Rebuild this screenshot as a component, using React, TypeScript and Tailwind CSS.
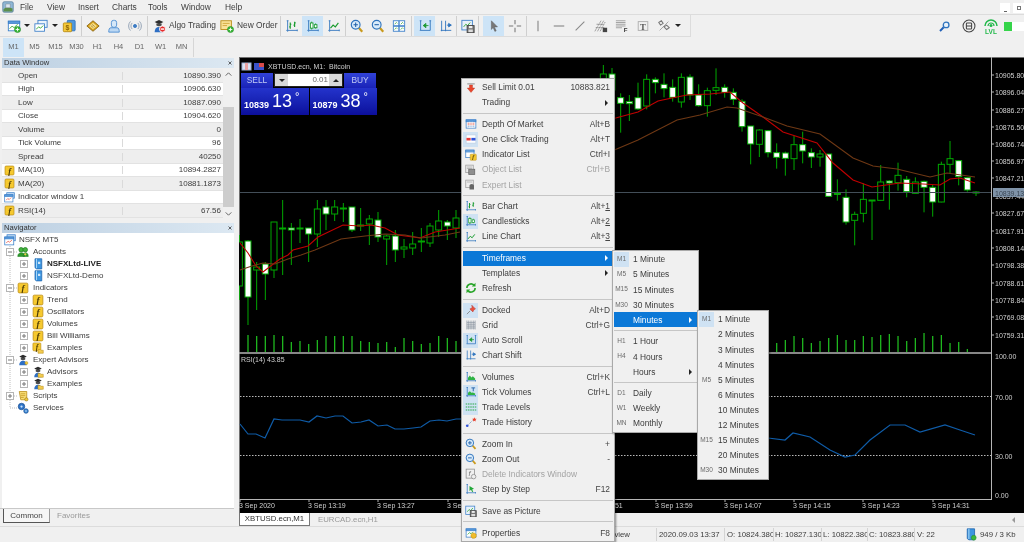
import type { ReactNode } from "react";

// ---------- icons ----------
const axes = <path d="M3 2v11h11M1.5 13H3M3 14.5V13M14 12v2M2 2h2" stroke="#2f74bd" fill="none" />;

const fBadge = (x = 0, y = 0, s = 16) => (
  <g transform={`translate(${x} ${y}) scale(${s / 16})`}>
    <rect x="1.5" y="1.5" width="13" height="13" rx="1.5" fill="#f6c92f" stroke="#b98a12" />
    <text x="8" y="12.5" textAnchor="middle" fontSize="12" fontStyle="italic" fontWeight="700" fontFamily="'Liberation Serif', serif" fill="#4b3a05">f</text>
  </g>
);

const folderBit = <path d="M8 10h3l1 1h3v4H8z" fill="#f3cc4f" stroke="#b98a12" strokeWidth=".7" />;

const cap = (
  <g>
    <path d="M8 1l5 2.4L8 6 3 3.4z" fill="#2c2c2c" />
    <path d="M5 5v2.4c1.8 1.2 4.2 1.2 6 0V5" fill="#4b4b4b" />
    <path d="M3 15c0-4 2-6 5-6s5 2 5 6z" fill="#2e6fc4" />
  </g>
);

const win = (
  <g>
    <rect x="1.5" y="2.5" width="13" height="11" fill="#fff" stroke="#3b7fc9" />
    <rect x="1.5" y="2.5" width="13" height="2.5" fill="#5b9ddd" stroke="#3b7fc9" />
  </g>
);

const icons: Record<string, ReactNode> = {
  newChart: (
    <g>
      {win}
      <path d="M3 11l3-3 2 2 4-4" stroke="#2aa52a" fill="none" />
      <circle cx="12" cy="12" r="3.5" fill="#3cb83c" stroke="#1c861c" strokeWidth=".6" />
      <path d="M12 10v4M10 12h4" stroke="#fff" />
    </g>
  ),
  profiles: (
    <g>
      <rect x="4.5" y="1.5" width="10.5" height="8" fill="#eaf3fb" stroke="#3b7fc9" />
      <rect x="1" y="5.5" width="11" height="8.5" fill="#fff" stroke="#3b7fc9" />
      <path d="M2.5 11.5l3-2.5 2 1.5 3-3" stroke="#2aa52a" fill="none" />
    </g>
  ),
  market: (
    <g>
      <rect x="6" y="1.5" width="9" height="12" rx="1" fill="#4d97dd" stroke="#2f74bd" />
      <rect x="1.5" y="4.5" width="9.5" height="10" rx="1" fill="#f5c93a" stroke="#b98a12" />
      <text x="6.2" y="12.5" textAnchor="middle" fontSize="8" fontWeight="700" fill="#8b6508">$</text>
    </g>
  ),
  book: (
    <g>
      <path d="M1 8l7-6 7 6-7 6z" fill="#d9a520" stroke="#8a6510" />
      <path d="M3.5 8L8 4.2 12.5 8 8 11.8z" fill="#f6de86" />
      <path d="M5.5 7.5l3 2.5M7 6.2l3 2.5" stroke="#8a6510" strokeWidth=".7" />
    </g>
  ),
  person: (
    <g>
      <path d="M2 15c0-3 .5-5 2.5-5h7c2 0 2.5 2 2.5 5z" fill="#bcd8f3" stroke="#4a8cd0" />
      <rect x="5" y="1.5" width="6" height="8" rx="2.5" fill="#d6e8f8" stroke="#4a8cd0" />
    </g>
  ),
  signal: (
    <g fill="none" stroke="#8a9bb0">
      <circle cx="8" cy="8" r="1.8" fill="#3d7cc4" stroke="#3d7cc4" />
      <path d="M4.8 4.5a5 5 0 0 0 0 7M11.2 4.5a5 5 0 0 1 0 7" />
      <path d="M2.8 2.8a7.5 7.5 0 0 0 0 10.4M13.2 2.8a7.5 7.5 0 0 1 0 10.4" />
    </g>
  ),
  algo: (
    <g>
      {cap}
      <circle cx="12" cy="11.5" r="3.5" fill="#e52b2b" stroke="#fff" />
      <rect x="10" y="10.7" width="4" height="1.6" fill="#fff" />
    </g>
  ),
  newOrder: (
    <g>
      <rect x="1" y="2" width="12" height="10" fill="#fae39a" stroke="#b98a12" />
      <path d="M3 5h8M3 7.5h5" stroke="#d0a436" />
      <circle cx="12" cy="12" r="3.5" fill="#3cb83c" stroke="#1c861c" strokeWidth=".6" />
      <path d="M12 10v4M10 12h4" stroke="#fff" />
    </g>
  ),
  bar: (
    <g>
      {axes}
      <path d="M6 4v7M4.8 9H6M6 6h1.2M11 3v6M9.8 7H11M11 4.5h1.2" stroke="#159a2c" strokeWidth="1.3" fill="none" />
    </g>
  ),
  candle: (
    <g>
      {axes}
      <path d="M6.5 3v9M11 5v6" stroke="#159a2c" />
      <rect x="5" y="4.5" width="3" height="6" fill="#fff" stroke="#159a2c" />
      <rect x="9.5" y="6.5" width="3" height="3.5" fill="#fff" stroke="#159a2c" />
    </g>
  ),
  line: (
    <g>
      {axes}
      <path d="M4 10.5l3-3.5 2.5 2L13 4.5" stroke="#159a2c" strokeWidth="1.3" fill="none" />
    </g>
  ),
  zoomIn: (
    <g>
      <path d="M10 10l4 4.5" stroke="#c99a1d" strokeWidth="2.4" />
      <circle cx="6.5" cy="6.5" r="5" fill="#d9ebfa" stroke="#2f74bd" strokeWidth="1.3" />
      <path d="M6.5 4v5M4 6.5h5" stroke="#1f5fa8" strokeWidth="1.2" />
    </g>
  ),
  zoomOut: (
    <g>
      <path d="M10 10l4 4.5" stroke="#c99a1d" strokeWidth="2.4" />
      <circle cx="6.5" cy="6.5" r="5" fill="#d9ebfa" stroke="#2f74bd" strokeWidth="1.3" />
      <path d="M4 6.5h5" stroke="#1f5fa8" strokeWidth="1.2" />
    </g>
  ),
  tile: (
    <g>
      <rect x="1.5" y="2" width="13" height="12" fill="#fff" stroke="#3b7fc9" />
      <path d="M8 2v12M1.5 8h13" stroke="#3b7fc9" strokeWidth="1.5" />
      <path d="M3 6l2-2 1 1M10 6l2-2 1 1M3 12l2-2 1 1M10 12l2-2 1 1" stroke="#2aa52a" fill="none" strokeWidth=".8" />
    </g>
  ),
  autoScroll: (
    <g>
      <path d="M3 2v11h11M14 2v11M2 2h2M13 2h2M2 13h1" stroke="#2f74bd" fill="none" />
      <path d="M6 7.5h6M6 7.5l3-2.5v5z" stroke="#1d9a33" fill="#1d9a33" />
    </g>
  ),
  shift: (
    <g>
      <path d="M3 2v12M7.5 2v12M2 13h12" stroke="#2f74bd" fill="none" />
      <path d="M9 7h5M11 5l3 2-3 2z" stroke="#2f74bd" fill="#2f74bd" />
    </g>
  ),
  savePic: (
    <g>
      <rect x="1" y="1.5" width="12" height="11" fill="#e8f1fa" stroke="#3b7fc9" />
      <path d="M3 9l2.5-3 2 1.5 3-3.5" stroke="#2aa52a" fill="none" />
      <rect x="7" y="7.5" width="8" height="8" fill="#777" stroke="#444" />
      <rect x="9" y="8" width="4" height="2.5" fill="#eee" />
      <rect x="8.5" y="12" width="5" height="3" fill="#ddd" />
    </g>
  ),
  cursor: <path d="M5 2l7 7H8.5l2 4.5-1.5.7-2-4.5L5 12z" fill="#777" stroke="#555" strokeWidth=".5" />,
  cross: <path d="M8 1v5M8 10v5M1 8h5M10 8h5" stroke="#777" strokeWidth="1.2" />,
  vline: <path d="M8 2v12" stroke="#888" strokeWidth="1.3" />,
  hline: <path d="M2 8h12" stroke="#888" strokeWidth="1.3" />,
  tline: <path d="M3 13L13 3" stroke="#888" strokeWidth="1.3" />,
  fib: (
    <g>
      <path d="M1 14L8 2M4 14l7-12M7 14l6-11M2 10h10M3 6h8" stroke="#777" strokeDasharray="1.3 .8" fill="none" />
      <rect x="10" y="10" width="5" height="5" fill="#444" />
    </g>
  ),
  fibF: (
    <g>
      <path d="M1 2h11M1 4h11M1 6h11M1 8h11M1 10h7" stroke="#999" />
      <text x="12" y="15" textAnchor="middle" fontSize="7" fontWeight="700" fill="#333">F</text>
    </g>
  ),
  textT: (
    <g>
      <rect x="2.5" y="3" width="11" height="10" fill="none" stroke="#aaa" />
      <text x="8" y="12" textAnchor="middle" fontSize="10" fontWeight="700" fontFamily="'Liberation Serif', serif" fill="#555">T</text>
    </g>
  ),
  shapes: (
    <g fill="none" stroke="#777" strokeWidth="1.2">
      <path d="M2 4l3-2 2 3-3 2z" />
      <path d="M8 9l3-2 3 3-3 2z" />
      <path d="M3 13L13 3" strokeWidth=".7" />
    </g>
  ),
  loupe: (
    <g>
      <path d="M7 9l-4.5 4.5" stroke="#1f5fb8" strokeWidth="2.4" />
      <circle cx="10" cy="6" r="3.5" fill="#e8f2fb" stroke="#2f74bd" strokeWidth="1.6" />
    </g>
  ),
  vps: (
    <g fill="none" stroke="#444" strokeWidth="1.2">
      <circle cx="8" cy="8" r="6.8" />
      <rect x="5" y="4.5" width="6" height="7" rx="1" />
      <path d="M5 8h6" />
    </g>
  ),
  sell: (
    <g>
      <path d="M3 2.5h10" stroke="#999" strokeWidth="1.5" />
      <path d="M6 4h4v4h3l-5 6-5-6h3z" fill="#e8452c" stroke="#b92f1a" strokeWidth=".5" />
    </g>
  ),
  dom: (
    <g>
      {win}
      <path d="M3.5 7h9M3.5 9h9" stroke="#e46a5e" />
      <path d="M3.5 11h9" stroke="#5b9ddd" />
      <path d="M6.5 5v8M9.5 5v8" stroke="#fff" />
    </g>
  ),
  oneClick: (
    <g>
      <rect x="1.5" y="2.5" width="13" height="11" fill="#fff" stroke="#bcd0e4" />
      <rect x="2" y="6.5" width="5.5" height="3.5" fill="#e63a3a" />
      <rect x="8.5" y="6.5" width="5.5" height="3.5" fill="#2f52d8" />
    </g>
  ),
  indList: (
    <g>
      <rect x="1" y="1.5" width="11" height="10" fill="#fff" stroke="#3b7fc9" />
      <rect x="1" y="1.5" width="11" height="2.5" fill="#7fb5e6" stroke="#3b7fc9" />
      {fBadge(6, 6, 10)}
    </g>
  ),
  objList: (
    <g>
      <rect x="1" y="1.5" width="10" height="10" fill="#eee" stroke="#9a9a9a" />
      <path d="M2.5 4h7M2.5 6h7" stroke="#aaa" />
      <rect x="5" y="7" width="8" height="7" fill="#8f8f8f" stroke="#666" />
    </g>
  ),
  expList: (
    <g>
      <rect x="1" y="1.5" width="10" height="10" fill="#eee" stroke="#9a9a9a" />
      <path d="M2.5 4h7" stroke="#aaa" />
      <path d="M6 9c0-1.5 1.5-2.5 3-2.5S12 7.5 12 9v5H6z" fill="#666" />
    </g>
  ),
  refresh: (
    <g fill="none" stroke="#2aa52a" strokeWidth="2.2">
      <path d="M2.5 8a5.5 5.5 0 0 1 9.5-3.8" />
      <path d="M13.5 8A5.5 5.5 0 0 1 4 11.8" />
      <path d="M14 1v5H9zM2 15v-5h5z" fill="#2aa52a" stroke="none" />
    </g>
  ),
  docked: (
    <g>
      <path d="M9 1.5l5 5-2 1-1.5 3-4-4 3-1.5z" fill="#e8503f" stroke="#b3352a" strokeWidth=".6" />
      <path d="M7 9l-4.5 4.5" stroke="#888" strokeWidth="1.2" />
    </g>
  ),
  grid: <path d="M2.5 2v12M13.5 2v12M2.5 4.5h11M2.5 7h11M2.5 9.5h11M2.5 12h11M5 2v12M8 2v12M11 2v12" stroke="#7b8794" strokeWidth=".8" fill="none" />,
  volumes: (
    <g>
      {axes}
      <path d="M4 12V9l2.5-3 2 2.5 2-1.5 3 3v2z" fill="#2fb344" />
      <path d="M8 2h5" stroke="#aaa" />
    </g>
  ),
  tickVol: (
    <g>
      {axes}
      <path d="M4 12V9l2.5-2 2 2 2-.5 3 1.5v2z" fill="#2fb344" />
      <path d="M8.5 2.5h5M11 2.5V7" stroke="#1f5fa8" strokeWidth="1.2" />
    </g>
  ),
  levels: <path d="M1 4h14M1 8h14M1 12h14" stroke="#27a744" strokeWidth="1.3" strokeDasharray="2 1" />,
  history: (
    <g>
      <path d="M3 13l9-9" stroke="#5b7fa8" strokeDasharray="1.5 1.2" />
      <circle cx="3" cy="13" r="1.8" fill="#2f52d8" />
      <path d="M12.5 1.5l.9 2 2.1.3-1.5 1.5.3 2.1-1.8-1-1.9 1 .4-2.1L9.5 3.8l2.1-.3z" fill="#e8402c" />
    </g>
  ),
  delInd: (
    <g fill="none" stroke="#8a8a8a">
      <rect x="1.5" y="1.5" width="11" height="12" />
      <text x="6" y="11" textAnchor="middle" fontSize="10" fontStyle="italic" fill="#777" stroke="none">f</text>
      <circle cx="11.5" cy="11.5" r="3" fill="#eee" />
    </g>
  ),
  step: (
    <g>
      {axes}
      <path d="M6 4l6 3.5-2.5 1 1.5 3-1.5.6-1.5-3-2 1.7z" fill="#22a83a" />
    </g>
  ),
  props: (
    <g>
      {win}
      <path d="M3.5 10L6 7.5 8 9l2.5-2.5" stroke="#2aa52a" fill="none" />
      <circle cx="11.5" cy="11.5" r="3.6" fill="#f0bd2b" stroke="#b98a12" strokeDasharray="1.5 .7" />
    </g>
  ),
  nsfxWin: (
    <g>
      <rect x="4" y="1" width="11" height="8" fill="#bcd8f3" stroke="#3b7fc9" />
      <rect x="1" y="4" width="12" height="10.5" fill="#fff" stroke="#3b7fc9" />
      <rect x="1" y="4" width="12" height="2.5" fill="#5b9ddd" stroke="#3b7fc9" />
      <path d="M3 12l2.5-2.5 2 1.5 3-3" stroke="#e8503f" fill="none" />
    </g>
  ),
  accounts: (
    <g>
      <circle cx="5.5" cy="5" r="3" fill="#45b33f" stroke="#1e7d1e" />
      <circle cx="11" cy="5" r="3" fill="#45b33f" stroke="#1e7d1e" />
      <path d="M1 14c0-3.5 2-5 5-5s4 1 4 5zM8 14c0-3 1.5-5 3.5-5s3.500 1.500 3.500 5z" fill="#2f9a2f" stroke="#1e7d1e" strokeWidth=".7" />
      <circle cx="11" cy="11" r="1.5" fill="#f0d34a" />
    </g>
  ),
  server: (
    <g>
      <path d="M4 1h9v13.5H6L4 13z" fill="#3c96e0" stroke="#1f64ae" />
      <path d="M6 1v12.5" stroke="#a8d6f6" strokeWidth="1.3" />
      <rect x="8" y="5" width="3" height="3" fill="#cfe7fa" />
    </g>
  ),
  f: fBadge(),
  fFolder: (
    <g>
      {fBadge(0, 0, 13)}
      {folderBit}
    </g>
  ),
  expert: (
    <g>
      {cap}
      <circle cx="12.5" cy="12" r="2" fill="#f0c93e" stroke="#b98a12" strokeWidth=".6" />
    </g>
  ),
  expertFolder: (
    <g>
      {cap}
      {folderBit}
    </g>
  ),
  scripts: (
    <g>
      <path d="M3 2h10v11H5z" fill="#f7dc74" stroke="#b98a12" />
      <path d="M5 5h6M5 7.5h6M5 10h4" stroke="#b98a12" strokeWidth=".8" />
      <circle cx="12.5" cy="12.5" r="2.2" fill="#f0c93e" stroke="#7a5d0b" strokeWidth=".6" />
    </g>
  ),
  services: (
    <g>
      <circle cx="6" cy="6" r="4.3" fill="#2f74c8" stroke="#1a4f91" />
      <circle cx="6" cy="6" r="1.5" fill="#cfe4f8" />
      <circle cx="12" cy="12" r="3" fill="#3e8ad8" stroke="#1a4f91" />
      <circle cx="12" cy="12" r="1" fill="#cfe4f8" />
    </g>
  ),
  appLogo: (
    <g>
      <rect x="1" y="1" width="14" height="14" rx="2" fill="#8fb7d6" stroke="#5a7f9e" />
      <path d="M2 11c3-3 5-4 12-1v4H2z" fill="#5c8f4c" />
      <path d="M5 4h6v5H5z" fill="#d9e6f2" stroke="#6b6b6b" strokeWidth=".5" />
    </g>
  ),
  lvl: (
    <g>
      <path d="M2 8a6 6 0 0 1 12 0" fill="none" stroke="#21b84a" strokeWidth="1.5" />
      <path d="M5 8a3 3 0 0 1 6 0" fill="none" stroke="#21b84a" strokeWidth="1.2" />
      <circle cx="8" cy="7.5" r="1.5" fill="#21b84a" />
      <text x="8" y="15.5" textAnchor="middle" fontSize="6.5" fontWeight="700" fill="#21b84a">LVL</text>
    </g>
  ),
  demo: (
    <g>
      <path d="M4 1h9v13.5H6L4 13z" fill="#3c96e0" stroke="#1f64ae" />
      <path d="M6 1v12.5" stroke="#a8d6f6" strokeWidth="1.3" />
      <circle cx="12" cy="12" r="3" fill="#3cb83c" stroke="#1c861c" strokeWidth=".6" />
    </g>
  ),
  close: <path d="M4 4l8 8M12 4l-8 8" stroke="#333" strokeWidth="2" />,
  up: <path d="M3 10l5-5 5 5" stroke="#555" strokeWidth="1.6" fill="none" />,
  down: <path d="M3 6l5 5 5-5" stroke="#555" strokeWidth="1.6" fill="none" />,
};

function Icon({ name, className = "h-[14px] w-[14px]" }: { name: string; className?: string }) {
  return (
    <svg viewBox="0 0 16 16" className={className}>
      {icons[name]}
    </svg>
  );
}

// ---------- top bars ----------
function Btn({ name, active }: { name: string; active?: boolean }) {
  return (
    <div className={`flex h-[20px] w-[21px] shrink-0 items-center justify-center ${active ? "bg-[#cde4f7]" : ""}`}>
      <Icon name={name} />
    </div>
  );
}

const Sep = () => <div className="h-[20px] w-px shrink-0 bg-[#cfcfcf]" />;
const Caret = () => <div className="h-0 w-0 border-x-[3px] border-t-[3px] border-x-transparent border-t-[#222]" />;

function MenuBar() {
  return (
    <div className="flex h-[15px] items-center border-b border-[#dcdcdc]">
      <div className="flex w-[20px] justify-center pr-[5px]">
        <Icon name="appLogo" className="h-[12px] w-[12px]" />
      </div>
      <span className="w-[27px]">File</span>
      <span className="w-[31px]">View</span>
      <span className="w-[34px]">Insert</span>
      <span className="w-[36px]">Charts</span>
      <span className="w-[33px]">Tools</span>
      <span className="w-[44px]">Window</span>
      <span>Help</span>
      <div className="ml-auto flex gap-[3px] self-start pt-[3px]">
        <div className="flex h-[10px] w-[10px] items-end justify-center bg-white pb-px">
          <div className="h-px w-[3px] bg-[#666]" />
        </div>
        <div className="flex h-[10px] w-[11px] items-center justify-center bg-white">
          <div className="h-[4px] w-[4px] border border-[#777]" />
        </div>
      </div>
    </div>
  );
}

function Toolbar() {
  return (
    <div className="flex h-[22px] items-center">
      <div className="flex h-full w-[691px] shrink-0 items-center border-r border-b border-[#dcdcdc] pl-[5px]">
        <div className="flex w-[18px] justify-center"><Icon name="newChart" /></div>
        <div className="flex w-[8px] justify-center"><Caret /></div>
        <div className="flex w-[20px] justify-center"><Icon name="profiles" /></div>
        <div className="flex w-[8px] justify-center"><Caret /></div>
        <div className="flex w-[19px] justify-center"><Icon name="market" /></div>
        <div className="ml-[3px]"><Sep /></div>
        <Btn name="book" />
        <Btn name="person" />
        <Btn name="signal" />
        <div className="ml-[2px]"><Sep /></div>
        <div className="ml-[4px] flex w-[68px] shrink-0 items-center gap-[3px] whitespace-nowrap">
          <Icon name="algo" />
          <span>Algo Trading</span>
        </div>
        <div className="flex w-[60px] shrink-0 items-center gap-[3px] whitespace-nowrap">
          <Icon name="newOrder" />
          <span>New Order</span>
        </div>
        <Sep />
        <Btn name="bar" />
        <Btn name="candle" active />
        <Btn name="line" />
        <div className="ml-px"><Sep /></div>
        <Btn name="zoomIn" />
        <Btn name="zoomOut" />
        <Btn name="tile" />
        <div className="ml-[2px]"><Sep /></div>
        <div className="ml-[2px]"><Btn name="autoScroll" active /></div>
        <Btn name="shift" />
        <Sep />
        <Btn name="savePic" />
        <Sep />
        <div className="ml-[4px]"><Btn name="cursor" active /></div>
        <Btn name="cross" />
        <div className="ml-px"><Sep /></div>
        <Btn name="vline" />
        <Btn name="hline" />
        <Btn name="tline" />
        <Btn name="fib" />
        <Btn name="fibF" />
        <Btn name="textT" />
        <Btn name="shapes" />
        <div className="flex w-[8px] justify-center"><Caret /></div>
      </div>
      <div className="ml-auto flex items-center">
        <Icon name="loupe" className="h-[13px] w-[13px]" />
        <Icon name="vps" className="ml-[11px] h-[14px] w-[14px]" />
        <Icon name="lvl" className="ml-[7px] h-[16px] w-[16px]" />
        <div className="ml-[5px] flex h-[9px] w-[20px] bg-white">
          <div className="h-full w-[8px] bg-[#35d44a]" />
        </div>
      </div>
    </div>
  );
}

const periods = ["M1", "M5", "M15", "M30", "H1", "H4", "D1", "W1", "MN"];

function PeriodBar() {
  return (
    <div className="flex h-[20px] items-center pl-[3px] text-[7.5px] text-[#666]">
      {periods.map((p, i) => (
        <div key={p} className={`flex h-[19px] w-[21px] items-center justify-center ${i === 0 ? "bg-[#cde4f7]" : ""}`}>
          {p}
        </div>
      ))}
      <div className="ml-[1px] h-[19px] w-px bg-[#d6d6d6]" />
    </div>
  );
}

// ---------- left panels ----------
function TitleBar({ title }: { title: string }) {
  return (
    <div className="mx-[2px] flex h-[10px] w-[232px] items-center justify-between bg-linear-to-r from-[#bdd0e2] to-[#dce8f2] pl-[2px] pr-[1px] text-[7.6px] leading-none text-[#333]">
      <span>{title}</span>
      <Icon name="close" className="h-[6px] w-[6px]" />
    </div>
  );
}

const dataRows: { name: string; value?: string; icon?: string }[] = [
  { name: "Open", value: "10890.390" },
  { name: "High", value: "10906.630" },
  { name: "Low", value: "10887.090" },
  { name: "Close", value: "10904.620" },
  { name: "Volume", value: "0" },
  { name: "Tick Volume", value: "96" },
  { name: "Spread", value: "40250" },
  { name: "MA(10)", value: "10894.2827", icon: "f" },
  { name: "MA(20)", value: "10881.1873", icon: "f" },
  { name: "Indicator window 1", icon: "nsfxWin" },
  { name: "RSI(14)", value: "67.56", icon: "f" },
];

function DataWindow() {
  return (
    <div className="pt-px">
      <TitleBar title="Data Window" />
      <div className="ml-[2px] mt-px flex w-[232px]">
        <div className="w-[221px]">
          {dataRows.map((r, i) => (
            <div key={r.name} className={`flex h-[13.5px] items-center border-b border-[#e2e2e2] pt-px ${i % 2 ? "bg-white" : "bg-[#eeeeee]"}`}>
              <div className="flex w-[15px] justify-center">
                {r.icon && <Icon name={r.icon} className="h-[11px] w-[11px]" />}
              </div>
              <span className="flex-1 whitespace-nowrap pl-px">{r.name}</span>
              {r.value && (
                <span className="w-[101px] border-l border-[#dadada] pr-[2px] text-right">{r.value}</span>
              )}
            </div>
          ))}
        </div>
        <div className="flex w-[11px] flex-col items-center">
          <Icon name="up" className="mt-[1px] h-[9px] w-[9px]" />
          <div className="mt-[28px] h-[100px] w-full bg-[#cdcdcd]" />
          <Icon name="down" className="mt-auto h-[9px] w-[9px]" />
        </div>
      </div>
    </div>
  );
}

function Guide({ box, tee, end, line = true }: { box?: "plus" | "minus"; tee?: boolean; end?: boolean; line?: boolean }) {
  return (
    <svg viewBox="0 0 14 12" className="h-[12px] w-[14px] shrink-0">
      {line && <path d={end ? "M7 0v6" : "M7 0v12"} stroke="#bdbdbd" strokeDasharray="1 1" />}
      {tee && <path d="M7 6h7" stroke="#bdbdbd" strokeDasharray="1 1" />}
      {box && <rect x="3.5" y="2.5" width="7" height="7" fill="#fff" stroke="#b5b5b5" />}
      {box && <path d="M5 6h4" stroke="#777" />}
      {box === "plus" && <path d="M7 4v4" stroke="#777" />}
    </svg>
  );
}

const tree: { label: string; icon: string; level: 1 | 2; box?: "plus" | "minus"; bold?: boolean; end?: boolean }[] = [
  { label: "Accounts", icon: "accounts", level: 1, box: "minus" },
  { label: "NSFXLtd-LIVE", icon: "server", level: 2, bold: true },
  { label: "NSFXLtd-Demo", icon: "server", level: 2 },
  { label: "Indicators", icon: "f", level: 1, box: "minus" },
  { label: "Trend", icon: "f", level: 2 },
  { label: "Oscillators", icon: "f", level: 2 },
  { label: "Volumes", icon: "f", level: 2 },
  { label: "Bill Williams", icon: "f", level: 2 },
  { label: "Examples", icon: "fFolder", level: 2 },
  { label: "Expert Advisors", icon: "expert", level: 1, box: "minus" },
  { label: "Advisors", icon: "expertFolder", level: 2 },
  { label: "Examples", icon: "expertFolder", level: 2 },
  { label: "Scripts", icon: "scripts", level: 1, box: "plus" },
  { label: "Services", icon: "services", level: 1, end: true },
];

function Navigator() {
  return (
    <div className="mt-[5px] flex min-h-0 flex-1 flex-col">
      <TitleBar title="Navigator" />
      <div className="ml-[2px] flex w-[232px] flex-1 flex-col bg-white pl-px pt-px">
        <div className="flex h-[12px] items-center">
          <div className="flex w-[14px] justify-center"><Icon name="nsfxWin" className="h-[12px] w-[12px]" /></div>
          <span className="ml-[2px]">NSFX MT5</span>
        </div>
        {tree.map((t) => (
          <div key={t.label + t.level + t.icon} className="flex h-[12px] items-center">
            <Guide box={t.level === 1 ? t.box : undefined} tee={t.level === 1} end={t.end} />
            {t.level === 2 && <Guide box="plus" line={false} />}
            <div className={`flex w-[12px] shrink-0 justify-center ${t.level === 2 ? "ml-px" : ""}`}>
              <Icon name={t.icon} className="h-[12px] w-[12px]" />
            </div>
            <span className={`${t.level === 2 ? "ml-[3px]" : "ml-[4px]"} ${t.bold ? "font-bold text-[#222]" : ""}`}>{t.label}</span>
          </div>
        ))}
      </div>
      <div className="flex h-[18px] w-[234px] border-t border-[#c8c8c8] pl-[3px]">
        <div className="flex h-[14px] w-[47px] items-center justify-center border-x border-b border-l-[#555] border-b-[#555] border-r-[#999] bg-[#f6f6f6] text-[#444]">
          Common
        </div>
        <span className="ml-[7px] mt-[3px] text-[#999]">Favorites</span>
      </div>
    </div>
  );
}

// ---------- chart ----------
// [wickTop, wickBottom, bodyTop, bodyBottom, white]
type Bar = [number, number, number, number, number];
const xAt = (k: number) => 274 + k * 8.667;
const z = (n: number) => 60 + n / 3;

const leftBars: [number, ...Bar][] = [
  [-4, 235, 300, 242, 286, 0],
  [-3, 240, 325, 241, 297, 1],
  [-2, 262, 310, 267, 270, 0],
  [-1, 262, 300, 264, 274, 1],
  [0, 222, 278, 222, 270, 0],
  [1, 200, 275, 228, 229, 1],
  [2, 223, 265, 228, 230, 1],
  [3, 219, 243, 228, 229, 1],
  [4, 228, 262, 228, 234, 1],
  [5, 200, 247, 209, 234, 0],
  [6, 200, 230, 207, 214, 1],
  [7, 200, 221, 207, 214, 0],
  [8, 203, 222, 208, 209, 1],
  [9, 207, 232, 207, 230, 1],
  [10, 208, 231, 225, 226, 1],
  [11, 215, 245, 219, 224, 0],
  [12, 212, 242, 220, 237, 1],
  [13, 235, 265, 236, 239, 0],
  [14, 230, 262, 236, 250, 1],
  [15, 239, 258, 247, 249, 0],
  [16, 232, 255, 244, 248, 0],
  [17, 228, 252, 241, 242, 1],
  [18, 223, 247, 226, 243, 0],
  [19, 210, 237, 221, 230, 0],
  [20, 220, 240, 222, 226, 1],
  [21, 210, 238, 218, 228, 0],
  [38, 65, 100, 74, 95, 0],
  [39, 68, 100, 74, 90, 1],
];

// zoomed coords of the right half, index 0 sits at k = 40
const rightBars: Bar[] = [
  [100, 218, 113, 130, 1], [105, 183, 125, 131, 1], [68, 150, 113, 147, 1], [43, 148, 58, 138, 0],
  [52, 100, 58, 68, 1], [40, 112, 73, 86, 1], [58, 125, 82, 112, 1], [40, 143, 52, 126, 0],
  [43, 120, 51, 105, 1], [73, 140, 105, 137, 1], [83, 170, 92, 137, 0], [25, 105, 83, 91, 0],
  [73, 113, 82, 97, 1], [85, 135, 97, 118, 1], [118, 215, 124, 200, 1], [198, 313, 198, 252, 1],
  [208, 291, 210, 253, 0], [210, 292, 212, 278, 1], [250, 326, 278, 292, 1], [275, 347, 279, 295, 1],
  [228, 330, 254, 296, 0], [215, 310, 254, 273, 1], [265, 324, 278, 291, 1], [270, 320, 282, 291, 0],
  [282, 410, 282, 409, 1], [358, 422, 400, 403, 1], [388, 494, 412, 486, 1], [455, 556, 463, 481, 0],
  [370, 487, 418, 460, 0], [420, 540, 420, 422, 1], [315, 421, 366, 421, 0], [360, 449, 363, 369, 1],
  [308, 392, 346, 368, 0], [348, 412, 358, 395, 1], [352, 400, 366, 400, 0], [362, 457, 364, 382, 1],
  [375, 470, 382, 426, 1], [305, 427, 313, 426, 0], [243, 340, 296, 313, 0], [300, 376, 302, 350, 1],
  [352, 395, 353, 390, 1], [394, 408, 396, 398, 1],
];

const bars: { x: number; b: Bar }[] = [
  ...leftBars.map(([k, a, b, c, d, w]) => ({ x: xAt(k), b: [a, b, c, d, w] as Bar })),
  ...rightBars.map(([a, b, c, d, w], i) => ({ x: xAt(40 + i), b: [z(a), z(b), z(c), z(d), w] as Bar })),
];

const volTops: [number, number][] = [
  [-3, 335], [-2, 336], [-1, 336], [0, 335], [1, 336], [2, 342], [3, 341], [4, 344], [5, 340], [6, 336], [7, 336],
  [8, 336], [9, 336], [10, 341], [11, 342], [12, 343], [13, 342], [14, 347], [15, 338], [16, 341], [17, 344], [18, 343],
  [19, 336], [20, 338], [21, 341],
  [58, 343], [59, 340], [60, 336], [61, 338], [62, 343], [63, 341], [64, 338], [65, 335], [66, 340], [67, 340], [68, 336],
  [69, 337], [70, 335], [71, 334], [72, 336], [73, 341], [74, 338], [75, 333], [76, 336], [77, 335], [78, 343], [79, 342], [80, 349],
];

const redLeft = "240,243 248,253 256,266 263,272 272,265 280,259 288,255 293,250 308,246 318,237 343,225 360,226 371,225 385,228 398,235 420,238 435,232 460,228";
const redRight = "612,119 638,112 658,101 672,98 687,95 710,94 730,92 743,103 763,117 783,132 817,143 833,163 853,180 872,187 900,183 923,184 940,185 950,179 960,178 975,183";
const brownLeft = "240,270 252,266 263,263 275,264 288,259 301,255 315,250 341,239 365,236 385,234 405,235 421,238 445,235 460,232";
const brownRight = "612,151 638,140 677,120 700,115 727,107 737,108 763,117 787,126 820,134 853,158 873,166 897,169 930,177 947,173 975,177";
const rsiLeft = "240,424 248,434 256,434 265,438 274,419 282,420 291,420 300,420 309,422 317,416 326,418 335,416 343,416 352,423 361,422 369,420 378,426 387,425 395,429 404,429 413,428 421,427 430,421 439,420 447,421 456,419 465,419";
const rsiRight = "768,438 785,440 793,433 810,437 830,450 845,457 855,455 870,440 890,425 905,425 920,432 945,425 960,430 975,435";

const priceLabels: [string, number][] = [
  ["10905.808", 75], ["10896.041", 92], ["10886.274", 110], ["10876.507", 127], ["10866.741", 144], ["10856.974", 161],
  ["10847.210", 178], ["10837.443", 196], ["10827.676", 213], ["10817.910", 231], ["10808.143", 248], ["10798.380", 265],
  ["10788.613", 283], ["10778.846", 300], ["10769.080", 317], ["10759.313", 335],
];
const rsiLabels: [string, number][] = [["100.00", 356], ["70.00", 397], ["30.00", 456], ["0.00", 495]];
const dates: [string, number][] = [
  ["3 Sep 2020", 239], ["3 Sep 13:19", 308], ["3 Sep 13:27", 377], ["3 Sep 13:35", 447], ["3 Sep 13:51", 585],
  ["3 Sep 13:59", 655], ["3 Sep 14:07", 724], ["3 Sep 14:15", 793], ["3 Sep 14:23", 862], ["3 Sep 14:31", 932],
];

function ChartDrawing() {
  const label = { fontSize: 7, fill: "#cfcfcf", fontFamily: "'Liberation Sans', sans-serif" };
  return (
    <svg viewBox="239 57 785 456" className="h-[456px] w-[785px]">
      <rect x="239" y="57" width="785" height="456" fill="#000" />
      <path d="M239 57.5H1024M239.5 57V513" stroke="#707070" />
      {bars.map(({ x, b }, i) => (
        <g key={i}>
          <path d={`M${x} ${b[0]}V${b[1]}`} stroke="#00a800" />
          <rect x={x - 3} y={b[2]} width="6" height={Math.max(b[3] - b[2], 1)} fill={b[4] ? "#fff" : "#000"} stroke="#00a800" />
        </g>
      ))}
      {volTops.map(([k, t]) => (
        <path key={k} d={`M${xAt(k)} ${t}V352`} stroke="#1fb81f" strokeWidth="1.3" />
      ))}
      <polyline points={redLeft} fill="none" stroke="#c00000" strokeWidth="1.1" />
      <polyline points={redRight} fill="none" stroke="#c00000" strokeWidth="1.1" />
      <polyline points={brownLeft} fill="none" stroke="#6f3814" strokeWidth="1.1" />
      <polyline points={brownRight} fill="none" stroke="#6f3814" strokeWidth="1.1" />
      <path d="M240 192.5H991" stroke="#434e58" />
      <path d="M239 353H992" stroke="#b5b5b5" strokeWidth="1.5" />
      <path d="M240 396.5H991M240 455.5H991" stroke="#b8b8b8" strokeDasharray="1.5 1.5" />
      <polyline points={rsiLeft} fill="none" stroke="#0f5ca8" strokeWidth="1.2" />
      <polyline points={rsiRight} fill="none" stroke="#0f5ca8" strokeWidth="1.2" />
      <path d="M240 499.5H992M991.5 57V500" stroke="#b5b5b5" />
      <path d="M991 75h3M991 92h3M991 110h3M991 127h3M991 144h3M991 161h3M991 178h3M991 213h3M991 231h3M991 248h3M991 265h3M991 283h3M991 300h3M991 317h3M991 335h3" stroke="#b5b5b5" />
      {priceLabels.map(([t, y]) => (
        <text key={t} x="995" y={y + 2.5} {...label}>{t}</text>
      ))}
      <rect x="993" y="188" width="31" height="9" fill="#7f93a8" />
      <text x="995" y="195.5" {...label} fill="#3b4754">10839.13</text>
      {rsiLabels.map(([t, y]) => (
        <text key={t} x="995" y={y + 2.5} {...label}>{t}</text>
      ))}
      {dates.map(([t, x]) => (
        <g key={t}>
          <path d={`M${x + 1} 499V502`} stroke="#b5b5b5" />
          <text x={x} y="508" {...label}>{t}</text>
        </g>
      ))}
      <text x="241" y="362" {...label}>RSI(14) 43.85</text>
      <rect x="242" y="63" width="9" height="7" fill="#d8e2f3" stroke="#9fb2d4" />
      <rect x="245" y="63" width="3" height="7" fill="#e8a2a2" />
      <rect x="254" y="63" width="10" height="7" fill="#3b52c8" />
      <rect x="259" y="63" width="5" height="4" fill="#d84a4a" />
      <text x="268" y="69" {...label}>XBTUSD.ecn, M1:{"\u00a0\u00a0"}Bitcoin</text>
    </svg>
  );
}

function OneClick() {
  return (
    <div className="absolute left-[2px] top-[16px] w-[136px] text-white">
      <div className="flex h-[15px] gap-px">
        <div className="flex w-[32px] items-center justify-center bg-linear-to-b from-[#3142d8] to-[#1a22b8] text-[#c3cbf5]">SELL</div>
        <div className="flex h-[14px] w-[69px] border border-[#222] bg-white text-[8px] text-[#666]">
          <div className="flex w-[13px] items-center justify-center bg-[#d8d8d8]"><Caret /></div>
          <div className="flex-1 pr-px text-right leading-[12px]">0.01</div>
          <div className="flex w-[13px] items-center justify-center bg-[#d8d8d8]">
            <div className="h-0 w-0 border-x-[3px] border-b-[3px] border-x-transparent border-b-[#222]" />
          </div>
        </div>
        <div className="flex w-[32px] items-center justify-center bg-linear-to-b from-[#3142d8] to-[#1a22b8] text-[#c3cbf5]">BUY</div>
      </div>
      <div className="flex h-[27px] gap-px">
        {[["10839", "13"], ["10879", "38"]].map(([a, b]) => (
          <div key={a} className="flex flex-1 items-start bg-linear-to-b from-[#2433cc] to-[#0c0e9c] pl-[3px] whitespace-nowrap">
            <span className="mt-[13px] text-[9px] leading-none font-bold">{a}</span>
            <span className="ml-[3px] mt-[2px] text-[18px] leading-[22px]">{b}</span>
            <span className="ml-[3px] mt-[3px] text-[11px] leading-none">°</span>
          </div>
        ))}
      </div>
    </div>
  );
}

// ---------- menus ----------
type Item = {
  label?: string;
  icon?: string;
  key?: ReactNode;
  sub?: boolean;
  off?: boolean;
  on?: boolean;
  hot?: boolean;
  code?: string;
};

const mainMenu: Item[] = [
  { label: "Sell Limit 0.01", icon: "sell", key: "10883.821" },
  { label: "Trading", sub: true },
  {},
  { label: "Depth Of Market", icon: "dom", key: "Alt+B" },
  { label: "One Click Trading", icon: "oneClick", key: "Alt+T", on: true },
  { label: "Indicator List", icon: "indList", key: "Ctrl+I" },
  { label: "Object List", icon: "objList", key: "Ctrl+B", off: true },
  { label: "Expert List", icon: "expList", off: true },
  {},
  { label: "Bar Chart", icon: "bar", key: <>Alt+<u>1</u></> },
  { label: "Candlesticks", icon: "candle", key: <>Alt+<u>2</u></>, on: true },
  { label: "Line Chart", icon: "line", key: <>Alt+<u>3</u></> },
  {},
  { label: "Timeframes", sub: true, hot: true },
  { label: "Templates", sub: true },
  { label: "Refresh", icon: "refresh" },
  {},
  { label: "Docked", icon: "docked", key: "Alt+D", on: true },
  { label: "Grid", icon: "grid", key: "Ctrl+G" },
  { label: "Auto Scroll", icon: "autoScroll", on: true },
  { label: "Chart Shift", icon: "shift" },
  {},
  { label: "Volumes", icon: "volumes", key: "Ctrl+K" },
  { label: "Tick Volumes", icon: "tickVol", key: "Ctrl+L", on: true },
  { label: "Trade Levels", icon: "levels", on: true },
  { label: "Trade History", icon: "history" },
  {},
  { label: "Zoom In", icon: "zoomIn", key: "+" },
  { label: "Zoom Out", icon: "zoomOut", key: "-" },
  { label: "Delete Indicators Window", icon: "delInd", off: true },
  { label: "Step by Step", icon: "step", key: "F12" },
  {},
  { label: "Save as Picture", icon: "savePic" },
  {},
  { label: "Properties", icon: "props", key: "F8" },
];

const timeMenu: Item[] = [
  { code: "M1", label: "1 Minute", on: true },
  { code: "M5", label: "5 Minutes" },
  { code: "M15", label: "15 Minutes" },
  { code: "M30", label: "30 Minutes" },
  { label: "Minutes", sub: true, hot: true },
  {},
  { code: "H1", label: "1 Hour" },
  { code: "H4", label: "4 Hours" },
  { label: "Hours", sub: true },
  {},
  { code: "D1", label: "Daily" },
  { code: "W1", label: "Weekly" },
  { code: "MN", label: "Monthly" },
];

const minuteMenu: Item[] = [
  { code: "M1", label: "1 Minute", on: true },
  { label: "2 Minutes" },
  { label: "3 Minutes" },
  { label: "4 Minutes" },
  { code: "M5", label: "5 Minutes" },
  { label: "6 Minutes" },
  { label: "10 Minutes" },
  { label: "12 Minutes" },
  { code: "M15", label: "15 Minutes" },
  { label: "20 Minutes" },
  { code: "M30", label: "30 Minutes" },
];

function Rows({ items }: { items: Item[] }) {
  return (
    <>
      {items.map((m, i) =>
        !m.label ? (
          <div key={i} className="flex h-[6.6px] items-center">
            <div className="h-px w-full bg-[#c6c6c6]" />
          </div>
        ) : (
          <div
            key={i}
            className={`flex h-[15.1px] items-center pr-[3px] whitespace-nowrap ${m.hot ? "bg-[#0b78d7] text-white" : m.off ? "text-[#a3a3a3]" : ""}`}
          >
            <div className={`flex h-[15px] w-[15px] shrink-0 items-center justify-center text-[6.5px] text-[#6a6a6a] ${m.on ? "bg-[#cfe2f3]" : ""}`}>
              {m.icon ? <Icon name={m.icon} className="h-[12px] w-[12px]" /> : m.code}
            </div>
            <span className="ml-[4px] flex-1">{m.label}</span>
            {m.key && <span className={m.off ? "" : "text-[#444]"}>{m.key}</span>}
            {m.sub && (
              <div className={`mr-[2px] h-0 w-0 border-y-[3px] border-l-[3px] border-y-transparent ${m.hot ? "border-l-white" : "border-l-[#222]"}`} />
            )}
          </div>
        ),
      )}
    </>
  );
}

const menuBox = "absolute border border-[#a9a9a9] bg-[#f0f0f0] p-px shadow-[1px_1px_2px_rgba(0,0,0,0.45)]";

// ---------- app ----------
export default function App() {
  return (
    <div className="relative h-[542px] w-[1024px] overflow-hidden bg-[#f0f0f0] font-['Liberation_Sans',sans-serif] text-[8.4px] leading-none text-[#3c3c3c] blur-[0.3px]">
      <MenuBar />
      <Toolbar />
      <PeriodBar />

      <div className="flex h-[470px]">
        <aside className="flex w-[239px] shrink-0 flex-col border-b border-[#dcdcdc] text-[8px]">
          <DataWindow />
          <Navigator />
        </aside>
        <section className="flex min-w-0 flex-1 flex-col">
          <div className="relative h-[456px]">
            <ChartDrawing />
            <OneClick />
          </div>
          <div className="flex h-[14px] items-start border-b border-[#dcdcdc] text-[7.8px]">
            <div className="flex h-[13px] w-[71px] items-center justify-center border-x border-b border-[#777] bg-white text-[#333]">
              XBTUSD.ecn,M1
            </div>
            <span className="ml-[8px] mt-[3px] text-[#999]">EURCAD.ecn,H1</span>
            <div className="ml-auto mr-[9px] mt-[4px] h-0 w-0 border-y-[3px] border-r-[3px] border-y-transparent border-r-[#999]" />
          </div>
        </section>
      </div>

      <div className="flex h-[15px] items-center whitespace-nowrap text-[7.8px]">
        <div className="w-[656px] pr-[26px] text-right">Market Overview</div>
        <div className="h-[13px] w-[68px] overflow-hidden border-l border-[#d4d4d4] pl-[2px] leading-[13px]">2020.09.03 13:37</div>
        <div className="h-[13px] w-[49px] overflow-hidden border-l border-[#d4d4d4] pl-[2px] leading-[13px]">O: 10824.380</div>
        <div className="h-[13px] w-[48px] overflow-hidden border-l border-[#d4d4d4] pl-[1px] leading-[13px]">H: 10827.130</div>
        <div className="h-[13px] w-[46px] overflow-hidden border-l border-[#d4d4d4] pl-[1px] leading-[13px]">L: 10822.380</div>
        <div className="h-[13px] w-[47px] overflow-hidden border-l border-[#d4d4d4] pl-[1px] leading-[13px]">C: 10823.880</div>
        <div className="h-[13px] w-[46px] overflow-hidden border-l border-[#d4d4d4] pl-[2px] leading-[13px]">V: 22</div>
        <Icon name="demo" className="ml-[4px] h-[13px] w-[13px]" />
        <span className="ml-[3px]">949 / 3 Kb</span>
      </div>

      <div className={`${menuBox} left-[461px] top-[78px] w-[154px]`}>
        <Rows items={mainMenu} />
      </div>
      <div className={`${menuBox} left-[612px] top-[250px] w-[87px]`}>
        <Rows items={timeMenu} />
      </div>
      <div className={`${menuBox} left-[697px] top-[310px] w-[72px]`}>
        <Rows items={minuteMenu} />
      </div>
    </div>
  );
}
